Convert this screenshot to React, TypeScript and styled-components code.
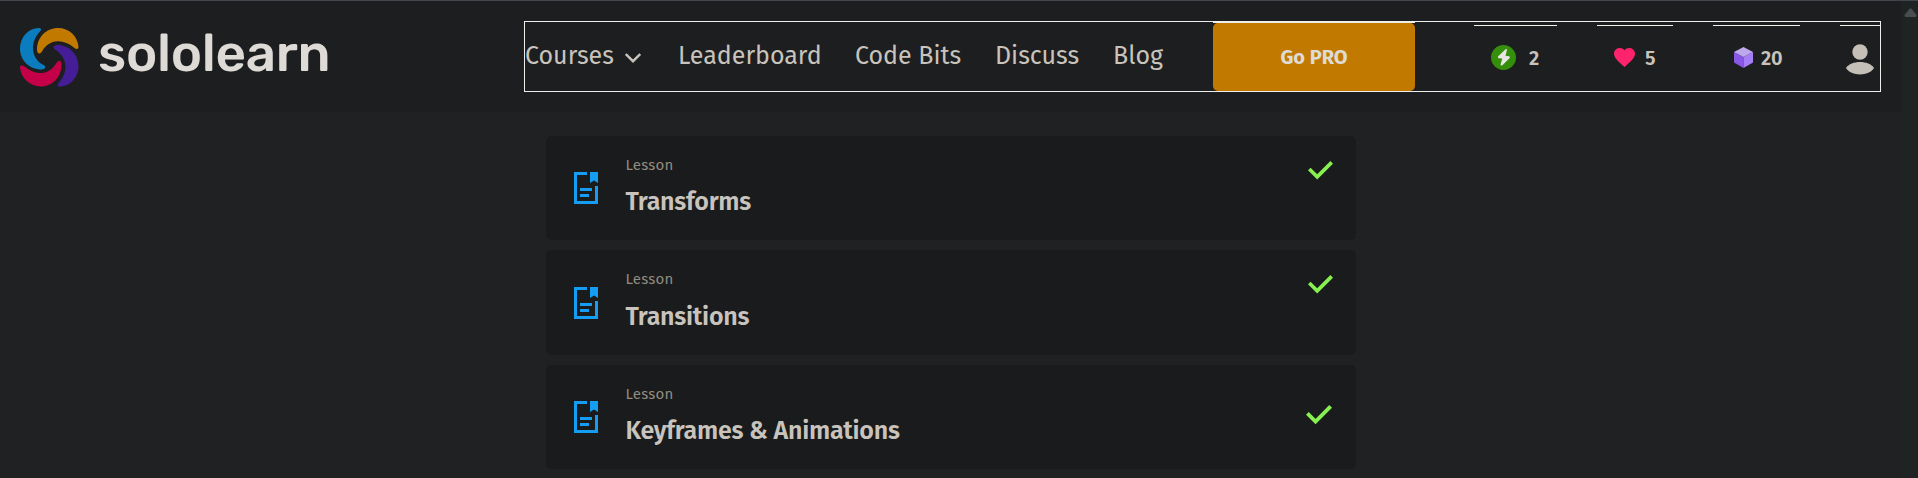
import React from "react";
import styled, { createGlobalStyle } from "styled-components";

const Global = createGlobalStyle`
  * { box-sizing: border-box; }
  body { margin: 0; background: #202122; font-family: "Fira Sans", "Noto Sans", sans-serif; color: #c8c3bc; overflow: hidden; }
  svg { display: block; flex: none; }
`;
const Page = styled.div`
  display: flex; height: 478px; border-top: 1px solid #42454c; overflow: hidden;
`;
const Main = styled.div`flex: 1; min-width: 0;`;
const Scrollbar = styled.div`
  width: 17px; background: #202324; padding: 7px 0 0 3px;
`;
const Header = styled.header`
  height: 111px; background: #1d1e1f; display: flex; align-items: flex-start; justify-content: space-between; padding: 20px 20px 0 20px;
`;
const Brand = styled.div`display: flex; align-items: flex-start; padding-top: 7px;`;
const Wordmark = styled.div`
  font: 500 53px/60px Rubik, Inter, sans-serif; letter-spacing: -0.3px; color: #dedad6; margin: -5px 0 0 19px; white-space: nowrap;
`;
const Nav = styled.nav`
  width: 1357px; height: 71px; border: 1px solid #f0eeea; display: flex; align-items: stretch;
`;
const Links = styled.div`display: flex; align-items: flex-start; width: 688px; padding-top: 16px;`;
const Link = styled.a<{ $w: number }>`
  width: ${p => p.$w}px; flex: none; display: flex; align-items: center; font-size: 25px; line-height: 36px; white-space: nowrap;
`;
const Chevron = styled.svg`margin: 3px 0 0 11px;`;
const ProGroup = styled.div`width: 202px; flex: none; border-top: 1px solid #f0eeea;`;
const Pro = styled.button`
  display: block; width: 202px; height: 68px; border: 0; border-radius: 5px; background: #c27900; color: #dedad6;
  font: 700 20px/68px "Fira Sans", "Noto Sans", sans-serif; padding: 0;
`;
const Stat = styled.div<{ $w: number; $ml: number; $pl: number; $gap: number }>`
  width: ${p => p.$w}px; margin: 3px 0 0 ${p => p.$ml}px; padding-left: ${p => p.$pl}px; border-top: 1px solid #f0eeea;
  height: 64px; display: flex; align-items: center; gap: ${p => p.$gap}px; flex: none; font-size: 20px; font-weight: 600; letter-spacing: -0.3px;
`;
const Avatar = styled.svg`margin-top: 3px;`;
const List = styled.main`width: 810px; margin: 24px 0 0 546px; display: grid; gap: 10px; grid-template-rows: 104px 105px 104px;`;
const Card = styled.article`
  background: #1a1b1c; border-radius: 5px; display: flex; padding: 0 23px 0 28px;
`;
const IconCell = styled.div<{ $top: number }>`padding-top: ${p => p.$top}px;`;
const Copy = styled.div<{ $gap: number }>`flex: 1; padding: 19px 0 0 27.5px; display: flex; flex-direction: column; gap: ${p => p.$gap}px;`;
const Kind = styled.span`font-size: 15px; line-height: 20px; letter-spacing: 0.2px; color: #928b7f;`;
const Title = styled.h3`
  margin: 0; font-size: 25px; line-height: 34px; font-weight: 600; letter-spacing: -0.25px;
`;
const CheckCell = styled.div<{ $top: number; $right: number }>`padding: ${p => p.$top}px ${p => p.$right}px 0 0;`;

const Logo = () => (
  <svg width="59" height="59" viewBox="0 0 59 59">
    <path fill="#0b7dbf" d="M18.500 0C8 .5 0 9.500 0 20.500C0 32.500 9.500 41.500 21.500 41.500C25.500 41.500 26.500 38.500 23.500 37C11 30.500 9.500 14.500 20 3.500C22 1.500 21 0 18.500 0Z" />
    <path fill="#c27900" d="M38 0C26 0 17 9.500 17 21.500C17 26 20 26.500 22 23.500C29 10.500 43.500 10.500 54.500 20C57 22 58.500 21 58.500 18.500C57.500 8 49 0 38 0Z" />
    <path fill="#451d96" d="M37.500 17C49 17 58.500 26.500 58.500 38C58.500 49.500 50 58.500 40 58.500C37 58.500 37 56.500 39 54.500C49 43.500 47.500 29.500 35 21.500C32 19.500 34 17 37.500 17Z" />
    <path fill="#c40048" d="M0 39.500C0 37 2 37 4.500 38.500C17 48.500 29 47 36.500 35C39 31.500 41.500 32.500 41.500 36.500C41.500 49 32.500 58.500 21 58.500C10 58.500 1 50 0 39.500Z" />
  </svg>
);
const LessonIcon = () => (
  <svg width="24" height="32" viewBox="0 0 24 32" fill="#149df2">
    <path d="M0 0H13V3H3V29H21V14H24V32H0ZM16 0H24V11L20 8.500L16 11ZM6 16H18V19H6ZM6 22H15V25H6Z" />
  </svg>
);
const Check = ({ size }: { size: number }) => (
  <svg width={size} height={size * 0.76} viewBox="0 0 25 19" fill="none" stroke="#86f050" strokeWidth="3.700"><path d="M1.300 8L9.200 15.900L23.700 1.400" /></svg>
);

const links = [
  { label: "Courses", w: 153 },
  { label: "Leaderboard", w: 177 },
  { label: "Code Bits", w: 140 },
  { label: "Discuss", w: 118 },
  { label: "Blog", w: 60 },
];
const lessons = [
  { title: "Transforms", icon: 36, gap: 10, check: 25, size: 25 },
  { title: "Transitions", icon: 37, gap: 11, check: 25, size: 25 },
  { title: "Keyframes & Animations", icon: 36, gap: 10, check: 40, size: 26 },
];

export default function App() {
  return (
    <Page>
      <Global />
      <Main>
        <Header>
          <Brand><Logo /><Wordmark>sololearn</Wordmark></Brand>
          <Nav>
            <Links>
              {links.map(l => (
                <Link key={l.label} $w={l.w}>
                  {l.label}
                  {l.label === "Courses" && (
                    <Chevron width="16" height="10" viewBox="0 0 16 10" fill="none" stroke="#c8c3bc" strokeWidth="2.400"><path d="M.8 1L8 8.200L15.200 1" /></Chevron>
                  )}
                </Link>
              ))}
            </Links>
            <ProGroup><Pro>Go PRO</Pro></ProGroup>
            <Stat $w={83} $ml={59} $pl={17} $gap={13}>
              <svg width="25" height="25" viewBox="0 0 25 25"><circle cx="12.500" cy="12.500" r="12.500" fill="#358f0c" /><path d="M14.800 4L7 11.500Q6.500 13 8 13.200L11.300 13.400L9.500 19.500Q10 21 11.400 20.200L18.700 13Q19.500 11.800 18 11.200L14.500 10.700L15.900 5Q16 3.500 14.800 4Z" fill="#e8e6e3" /></svg>
              2
            </Stat>
            <Stat $w={76} $ml={40} $pl={17} $gap={10}>
              <svg width="21" height="19" viewBox="0 0 21 19"><path fill="#ff226d" d="M10.500 19L9 17.700C4 13.200 0 9.700 0 5.800C0 2.500 2.500 0 5.700 0C7.600 0 9.400.9 10.500 2.300C11.600.9 13.400 0 15.300 0C18.500 0 21 2.500 21 5.800C21 9.700 17 13.200 12 17.700Z" /></svg>
              5
            </Stat>
            <Stat $w={87} $ml={40} $pl={21} $gap={8}>
              <svg width="19" height="21" viewBox="0 0 19 21"><path fill="#8957e5" d="M0 5L9.500 10V21L0 15.500Z" /><path fill="#a57df5" d="M19 5L9.500 10V21L19 15.500Z" /><path fill="#bda7ef" d="M9.500 0L19 5L9.500 10L0 5Z" /></svg>
              20
            </Stat>
            <Stat $w={40} $ml={40} $pl={6} $gap={0}>
              <Avatar width="28" height="31" viewBox="0 0 28 31" fill="#c4bfb7"><circle cx="14" cy="8" r="7.700" /><path d="M0 24C5 16 23 16 28 24C23 32.500 5 32.500 0 24Z" /></Avatar>
            </Stat>
          </Nav>
        </Header>
        <List>
          {lessons.map(l => (
            <Card key={l.title}>
              <IconCell $top={l.icon}><LessonIcon /></IconCell>
              <Copy $gap={l.gap}><Kind>Lesson</Kind><Title>{l.title}</Title></Copy>
              <CheckCell $top={l.check} $right={l.size - 25}><Check size={l.size} /></CheckCell>
            </Card>
          ))}
        </List>
      </Main>
      <Scrollbar><svg width="13" height="9" viewBox="0 0 13 9" fill="#494d50"><path d="M5.500.7Q6.500-.4 7.500.7L12.400 7Q13 9 11 9H2Q0 9 .6 7Z" /></svg></Scrollbar>
    </Page>
  );
}
